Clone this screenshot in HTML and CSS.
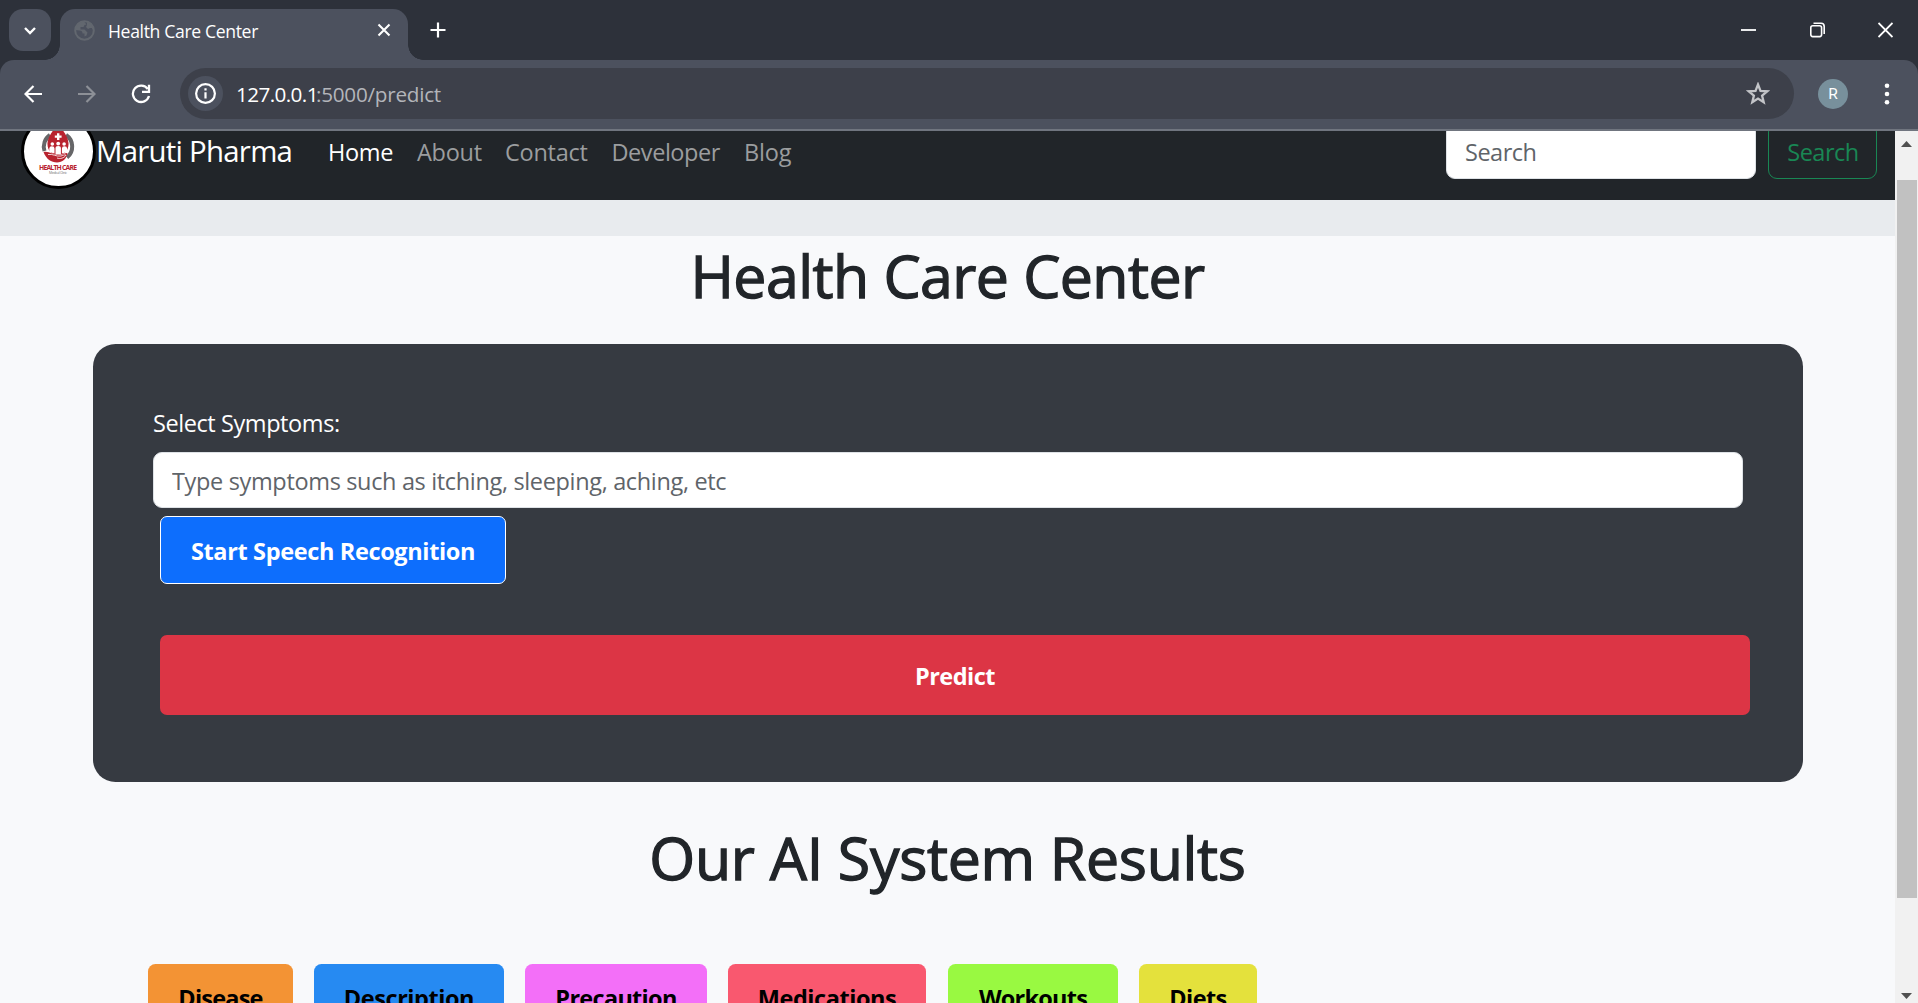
FILE: index.html
```html
<!DOCTYPE html>
<html lang="en">
<head>
<meta charset="utf-8">
<title>Health Care Center</title>
<link rel="stylesheet" href="styles.css">
</head>
<body>
<div class="browser">
  <div class="tabstrip">
    <div class="tab-search"><svg width="14" height="9" viewBox="0 0 14 9"><path d="M2 2l5 5 5-5" fill="none" stroke="#fff" stroke-width="2.4"/></svg></div>
    <div class="tab">
      <svg class="favicon" width="21" height="21" viewBox="0 0 21 21"><circle cx="10.5" cy="10.5" r="9.3" fill="none" stroke="#62676f" stroke-width="2"/><path d="M10 1.500C6 2 2 5 1.500 10l4 .5c2 0 3 1 3 3h2v3l2-1 1-3-3-3H6.500V7h3l1-2 2-.5zM13 2v3l-1 2 2 2 2-1h2l2 3C19 6 17 3 13 2z" fill="#62676f"/></svg>
      <span class="tab-title">Health Care Center</span>
      <svg class="tab-close" width="14" height="14" viewBox="0 0 14 14"><path d="M1.500 1.500l11 11M12.500 1.500l-11 11" stroke="#fff" stroke-width="2.1"/></svg>
    </div>
    <svg class="new-tab" width="16" height="16" viewBox="0 0 16 16"><path d="M8 .5v15M.5 8h15" stroke="#fff" stroke-width="2.200"/></svg>
    <div class="window-buttons">
      <svg width="15" height="16" viewBox="0 0 15 16"><path d="M0 8h15" stroke="#fff" stroke-width="1.800"/></svg>
      <svg width="15" height="16" viewBox="0 0 15 16"><rect x=".8" y="3.800" width="10.800" height="10.800" rx="2" fill="none" stroke="#fff" stroke-width="1.600"/><path d="M3.500 1.200H11a3.200 3.200 0 0 1 3.200 3.200V12" fill="none" stroke="#fff" stroke-width="1.600"/></svg>
      <svg width="15" height="16" viewBox="0 0 15 16"><path d="M.5 1l14 14M14.500 1l-14 14" stroke="#fff" stroke-width="1.800"/></svg>
    </div>
  </div>
  <div class="toolbar">
    <svg class="back" width="18" height="18" viewBox="0 0 18 18"><path d="M18 9H2M9.500 1L1.500 9l8 8" fill="none" stroke="#fff" stroke-width="2.200"/></svg>
    <svg class="forward" width="18" height="18" viewBox="0 0 18 18"><path d="M0 9h16M8.500 1l8 8-8 8" fill="none" stroke="#8d9097" stroke-width="2.200"/></svg>
    <svg class="reload" width="20" height="20" viewBox="0 0 20 20"><path d="M16.800 5A8.200 8.200 0 1 0 18 12" fill="none" stroke="#fff" stroke-width="2.300"/><path d="M18 .8v7h-7" fill="none" stroke="#fff" stroke-width="2.300"/></svg>
    <div class="address">
      <div class="site-info"><svg width="21" height="21" viewBox="0 0 21 21"><circle cx="10.500" cy="10.500" r="9.400" fill="none" stroke="#fff" stroke-width="2.200"/><path d="M10.500 9.300v6.200M10.500 5.300v2.300" stroke="#fff" stroke-width="2.200"/></svg></div>
      <span class="host">127.0.0.1</span><span class="path">:5000/predict</span>
      <svg class="star" width="24" height="23" viewBox="0 0 24 23"><path d="M12 2.500l2.500 6.300 6.700.5-5.100 4.300 1.600 6.600-5.700-3.600-5.700 3.600 1.600-6.600-5.100-4.300 6.700-.5z" fill="none" stroke="#c3c4c8" stroke-width="2.300"/></svg>
    </div>
    <div class="avatar">R</div>
    <svg class="menu" width="6" height="22" viewBox="0 0 6 22"><g fill="#fff"><circle cx="3" cy="2.700" r="2.300"/><circle cx="3" cy="11" r="2.300"/><circle cx="3" cy="19.300" r="2.300"/></g></svg>
  </div>
  <div class="viewport">
    <main class="page">
      <nav class="navbar">
        <div class="logo">
          <svg width="69" height="69" viewBox="24 116 69 69">
            <path d="M44.500 150A14 14 0 0 1 50 134M66 134A14 14 0 0 1 67 156.500" fill="none" stroke="#666668" stroke-width="4"/>
            <path d="M58 122c3 6 10 12 10.500 20 .5 8-5 12-10.500 12s-11-4-10.500-12c.5-8 7.500-14 10.500-20z" fill="#b8232f"/>
            <path d="M43.500 151c6-1 9 3 15 3 4 0 6-2 9-2-1 6-5 9.500-10.500 9.500s-11-3.500-13.500-10.500z" fill="#b8232f"/>
            <path d="M57 132.200h2.400v2.200h2.200v2.400h-2.200v2.200H57v-2.200h-2.200v-2.400H57z" fill="#fff"/>
            <g fill="#fff"><circle cx="52.300" cy="143" r="1.800"/><circle cx="58.200" cy="142.600" r="1.900"/><circle cx="64.100" cy="143" r="1.800"/><path d="M49.300 147.500a2.600 2.200 0 0 1 5.200 0v5l-5.200-1.500zM55.500 147.300a2.700 2.200 0 0 1 5.400 0v6.200h-5.400zM61.900 147.500a2.600 2.200 0 0 1 5.200 0v3.500l-5.200 1.500z"/></g>
            <path d="M48 153.500c5-1 8 2.500 13 1.500 2-.5 3-1.500 5-.8-2 3-6 4-9 2.800" fill="none" stroke="#fff" stroke-width=".8"/>
            <text x="58" y="168.500" class="logo-name" textLength="38">HEALTH CARE</text>
            <text x="58" y="173.400" class="logo-sub" textLength="18">Medical Clinic</text>
          </svg>
        </div>
        <span class="brand">Maruti Pharma</span>
        <a class="nav-link active w-home">Home</a>
        <a class="nav-link w-about">About</a>
        <a class="nav-link w-contact">Contact</a>
        <a class="nav-link w-developer">Developer</a>
        <a class="nav-link w-blog">Blog</a>
        <input class="search" type="text" placeholder="Search">
        <button class="search-button">Search</button>
      </nav>
      <div class="band"></div>
      <h1 class="heading title">Health Care Center</h1>
      <section class="card">
        <label class="label">Select Symptoms:</label>
        <input class="symptoms" type="text" placeholder="Type symptoms such as itching, sleeping, aching, etc">
        <button class="speech">Start Speech Recognition</button>
        <button class="predict">Predict</button>
      </section>
      <h1 class="heading results">Our AI System Results</h1>
      <div class="tags">
        <button class="tag disease">Disease</button>
        <button class="tag description">Description</button>
        <button class="tag precaution">Precaution</button>
        <button class="tag medications">Medications</button>
        <button class="tag workouts">Workouts</button>
        <button class="tag diets">Diets</button>
      </div>
    </main>
    <div class="scrollbar">
      <svg class="arrow-up" width="11" height="6" viewBox="0 0 11 6"><path d="M0 6l5.500-6L11 6z" fill="#505050"/></svg>
      <div class="thumb"></div>
      <svg class="arrow-down" width="11" height="6" viewBox="0 0 11 6"><path d="M0 0l5.500 6L11 0z" fill="#505050"/></svg>
    </div>
  </div>
</div>
</body>
</html>
```
FILE: styles.css
```css
* { box-sizing: border-box; }
body { margin: 0; font-family: "Open Sans", "Noto Sans", sans-serif; font-size: 23.5px; overflow: hidden; }
svg { display: block; flex: none; }
input, button { font-family: inherit; font-size: inherit; margin: 0; outline: none; white-space: nowrap; }

.browser { width: 1918px; height: 1003px; display: flex; flex-direction: column; overflow: hidden; background: #2d313a; }

.tabstrip { height: 60px; flex: none; display: flex; padding: 9px 0 0 9px; align-items: flex-start; }
.tab-search { width: 42px; height: 42px; border-radius: 14px; background: #4c515e; display: flex; align-items: center; justify-content: center; }
.tab { position: relative; width: 348px; height: 51px; margin-left: 9px; padding-left: 14px; border-radius: 15px 15px 0 0; background: #4c515e; display: flex; align-items: flex-start; }
.tab::before, .tab::after { content: ""; position: absolute; bottom: 0; width: 15px; height: 15px; }
.tab::before { left: -15px; background: radial-gradient(circle at 0 0, transparent 14.5px, #4c515e 15px); }
.tab::after { right: -15px; background: radial-gradient(circle at 100% 0, transparent 14.5px, #4c515e 15px); }
.favicon { margin-top: 11px; }
.tab-title { margin-left: 13px; margin-top: 10px; width: 259px; line-height: 25px; font-size: 17.6px; letter-spacing: -.35px; color: #fff; }
.tab-close { margin-top: 14px; margin-left: 10px; }
.new-tab { margin: 13px 0 0 22px; }
.window-buttons { margin: 13px 25px 0 auto; display: flex; gap: 53.500px; }

.toolbar { height: 71px; flex: none; display: flex; align-items: center; padding: 0 28px 2px 24px; background: #4c515e; border-bottom: 2px solid #70757f; border-radius: 14px 14px 0 0; }
.forward { margin-left: 36px; }
.reload { margin-left: 35px; }
.address { width: 1614px; height: 51px; margin-left: 29px; padding: 0 24px 0 8px; border-radius: 26px; background: #3d404a; display: flex; align-items: center; font-size: 20.700px; line-height: 30px; }
.site-info { width: 35px; height: 35px; border-radius: 50%; background: #4c515e; display: flex; align-items: center; justify-content: center; }
.host { width: 80px; margin-left: 13px; color: #fff; letter-spacing: -.6px; }
.path { color: #b3b5ba; letter-spacing: -.25px; }
.star { margin-left: auto; }
.avatar { width: 30px; height: 30px; margin-left: 24px; border-radius: 50%; background: #78909c; color: #fff; font: 15.500px/31px Roboto, sans-serif; text-align: center; }
.menu { margin-left: auto; }

.viewport { flex: 1; min-height: 0; display: flex; overflow: hidden; }
.page { width: 1895px; flex: none; margin-top: -29px; background: #f8f9fb; }
.navbar { height: 98px; display: flex; align-items: center; padding-left: 21px; background: #212529; }
.logo { width: 75px; height: 75px; border: 3px solid #000; border-radius: 50%; background: #fff; overflow: hidden; }
.logo-name { font: bold 6.800px "Open Sans", sans-serif; fill: #b8232f; text-anchor: middle; }
.logo-sub { font: 3.500px "Open Sans", sans-serif; fill: #777; text-anchor: middle; }
.brand { width: 231px; font-size: 29.400px; line-height: 40px; letter-spacing: -.75px; color: #fff; margin-top: -1px; white-space: nowrap; }
.nav-link { line-height: 36px; margin-top: 2px; color: #9b9d9f; flex: none; }
.nav-link.active { color: #fff; }
.w-home { width: 89px; letter-spacing: -.33px; margin-left: 1px; }
.w-about { width: 88px; letter-spacing: -.25px; }
.w-contact { width: 106.500px; letter-spacing: -.25px; }
.w-developer { width: 132.500px; letter-spacing: -.45px; }
.w-blog { width: 60px; letter-spacing: -.2px; }
.search, .symptoms { height: 56px; padding: 2px 17px 0; border: 1px solid #dee2e6; border-radius: 9px; background: #fff; }
.search { width: 310px; padding-left: 18px; margin-left: auto; letter-spacing: -.5px; }
.search::placeholder, .symptoms::placeholder { color: #5f6469; opacity: 1; }
.search-button { width: 109px; height: 56px; margin: 0 18px 0 12px; padding: 2px 0 0 1px; border: 1px solid #198754; border-radius: 9px; background: none; color: #198754; letter-spacing: -.5px; }

.band { height: 36px; background: #e8ebee; }
.heading { margin: 0; font-size: 59px; line-height: 72px; font-weight: 500; text-align: center; color: #212529; -webkit-text-stroke: 1.3px #212529; }
.title { padding-top: 3px; margin-bottom: 33px; letter-spacing: -.55px; }
.results { padding-top: 39px; letter-spacing: -.3px; }
.card { width: 1710px; height: 438px; margin-left: 93px; padding: 61px 60px 0; border-radius: 22.500px; background: #363a41; display: flex; flex-direction: column; align-items: flex-start; }
.label { line-height: 36px; margin-bottom: 11px; letter-spacing: -.42px; color: #fff; }
.symptoms { width: 1590px; padding-left: 18px; letter-spacing: -.345px; }
.speech { width: 346px; height: 68px; margin: 8px 0 0 7px; padding: 2px 0 0; border: 1px solid #fff; border-radius: 7px; background: #0d6efd; color: #fff; font-weight: 700; letter-spacing: -.36px; }
.predict { width: 1590px; height: 80px; margin: 51px 0 0 7px; padding: 2px 0 0; border: 0; border-radius: 7px; background: #dc3545; color: #fff; font-weight: 700; letter-spacing: -.5px; }
.tags { display: flex; gap: 21px; margin: 71px 0 0 148px; }
.tag { height: 68px; padding: 0 0 1px; border: 0; border-radius: 7.500px; color: #000; font-weight: 700; letter-spacing: -.5px; }
.disease { width: 145px; background: #f39334; letter-spacing: -.78px; }
.description { width: 190px; background: #268af2; letter-spacing: -.44px; }
.precaution { width: 182px; background: #f36ff8; letter-spacing: -.71px; }
.medications { width: 198px; background: #f9586f; letter-spacing: -.45px; }
.workouts { width: 170px; background: #99f941; letter-spacing: -.77px; margin-left: 1px; }
.diets { width: 118px; background: #e4e13c; letter-spacing: -.6px; }

.scrollbar { width: 23px; background: #f1f1f1; display: flex; flex-direction: column; align-items: center; }
.arrow-up { margin-top: 10px; }
.thumb { width: 20px; height: 718px; margin-top: 33px; background: #c1c1c1; }
.arrow-down { margin-top: 95px; }
```
